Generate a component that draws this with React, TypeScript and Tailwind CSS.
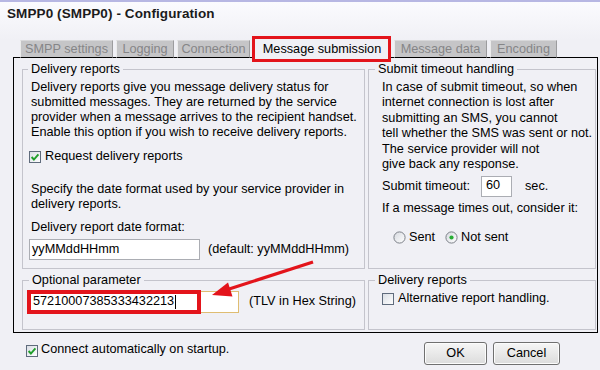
import type { ReactNode } from "react";

const CheckBox = ({ checked }: { checked: boolean }) => (
  <svg width="12" height="12" viewBox="0 0 12 12" className="shrink-0">
    <defs>
      <linearGradient id="cbfill" x1="0" y1="0" x2="1" y2="1">
        <stop offset="0" stopColor="#d9dde4" />
        <stop offset="1" stopColor="#ffffff" />
      </linearGradient>
    </defs>
    <rect x="0.5" y="0.5" width="11" height="11" fill="url(#cbfill)" stroke="#5f6b7c" />
    {checked && (
      <path d="M2.6 6 L4.9 8.5 L9.4 3.3" stroke="#1f9e2a" strokeWidth="1.9" fill="none" />
    )}
  </svg>
);

const Radio = ({ on }: { on: boolean }) => (
  <svg width="13" height="13" viewBox="0 0 13 13" className="shrink-0">
    <defs>
      <linearGradient id="rdfill" x1="0" y1="0" x2="1" y2="1">
        <stop offset="0" stopColor="#d6d9df" />
        <stop offset="1" stopColor="#ffffff" />
      </linearGradient>
    </defs>
    <circle cx="6.5" cy="6.5" r="5.6" fill="url(#rdfill)" stroke="#7c8088" />
    {on && <circle cx="6.5" cy="6.5" r="2.1" fill="#27ad35" />}
  </svg>
);

const Group = ({
  title,
  className,
  legendClass,
  children,
}: {
  title: string;
  className: string;
  legendClass: string;
  children: ReactNode;
}) => (
  <fieldset className={`border border-[#c4c4cc] ${className}`}>
    <legend className={`px-[3px] leading-[15px] ${legendClass}`}>{title}</legend>
    {children}
  </fieldset>
);

const tabs = [
  { name: "SMPP settings", w: "w-[93px]" },
  { name: "Logging", w: "w-[58px]" },
  { name: "Connection", w: "w-[73px]" },
  { name: "Message submission", w: "w-[138px]", active: true },
  { name: "Message data", w: "w-[93px]" },
  { name: "Encoding", w: "w-[67px]" },
];

export default function App() {
  return (
    <div className="relative w-[600px] h-[370px] overflow-hidden bg-[#f0f0f5] text-black font-['Liberation_Sans',Arial,sans-serif] text-[12.7px]">
      {/* title bar */}
      <div className="h-[40px] border-t-2 border-[#b7b7e3] bg-gradient-to-b from-[#fbfbfe] to-[#f0f0f5] pl-[7px] pt-[2px]">
        <span className="font-bold text-[13.5px] text-[#1b1b1b] tracking-[0.1px]">SMPP0 (SMPP0) - Configuration</span>
      </div>

      {/* tabs */}
      <div className="relative z-10 flex items-end gap-[3px] pl-[20px] h-[18px] -mb-px">
        {tabs.map((t) =>
          t.active ? (
            <div
              key={t.name}
              className={`relative ${t.w} h-[20px] flex items-center justify-center bg-[#f0f0f5] border border-b-0 border-black pt-[3px]`}
            >
              {t.name}
              <div className="absolute -left-[2px] -right-[1px] -top-[3px] -bottom-[4px] border-[3px] border-[#e3141b]" />
            </div>
          ) : (
            <div
              key={t.name}
              className={`${t.w} h-[18px] flex items-center justify-center pt-[2px] bg-[#c5c5c7] text-[#858587] border-l border-l-[#ececec] border-r border-r-[#9c9c9e] border-t border-t-[#d8d8da] border-b border-b-black`}
            >
              {t.name}
            </div>
          )
        )}
      </div>

      {/* tab panel */}
      <div className="ml-[13px] w-[585px] h-[276px] border border-black pl-[8px] pr-[1px] pt-[4px]">
        <div className="flex gap-[3px]">
          <Group title="Delivery reports" className="w-[343px] h-[207px] pl-[8px]" legendClass="-ml-[3px]">
            <p className="mt-[3px] leading-[15px] whitespace-nowrap">
              Delivery reports give you message delivery status for
              <br />
              submitted messages. They are returned by the service
              <br />
              provider when a message arrives to the recipient handset.
              <br />
              Enable this option if you wish to receive delivery reports.
            </p>
            <div className="mt-[9px] flex items-center gap-[2px] -ml-[2px] leading-[15px]">
              <CheckBox checked />
              <span className="ml-[2px]">Request delivery reports</span>
            </div>
            <p className="mt-[18px] leading-[15px] whitespace-nowrap">
              Specify the date format used by your service provider in
              <br />
              delivery reports.
            </p>
            <p className="mt-[8px] leading-[15px]">Delivery report date format:</p>
            <div className="mt-[4px] flex items-center -ml-[2px]">
              <div className="w-[171px] h-[21px] border border-[#abadb3] bg-white pl-[2px] leading-[19px]">yyMMddHHmm</div>
              <span className="ml-[8px] pt-[1px]">(default: yyMMddHHmm)</span>
            </div>
          </Group>

          <Group title="Submit timeout handling" className="flex-1 h-[207px] pl-[13px]" legendClass="-ml-[7px]">
            <p className="mt-[3px] leading-[15.4px] whitespace-nowrap">
              In case of submit timeout, so when
              <br />
              internet connection is lost after
              <br />
              submitting an SMS, you cannot
              <br />
              tell whether the SMS was sent or not.
              <br />
              The service provider will not
              <br />
              give back any response.
            </p>
            <div className="mt-[4px] flex items-center">
              <span className="w-[99px]">Submit timeout:</span>
              <div className="w-[31px] h-[21px] border border-[#abadb3] bg-white pl-[4px] leading-[16px]">60</div>
              <span className="ml-[13px]">sec.</span>
            </div>
            <p className="mt-[4px] leading-[15px]">If a message times out, consider it:</p>
            <div className="mt-[14px] flex items-center pl-[11px] leading-[15px]">
              <Radio on={false} />
              <span className="ml-[3px]">Sent</span>
              <span className="ml-[10px]">
                <Radio on />
              </span>
              <span className="ml-[3px]">Not sent</span>
            </div>
          </Group>
        </div>

        <div className="mt-[4px] flex gap-[3px]">
          <Group title="Optional parameter" className="w-[343px] h-[57px] pl-[8px]" legendClass="-ml-[2px]">
            <div className="mt-[3px] flex items-center -ml-[2px]">
              <div className="relative w-[210px] h-[22px] border border-[#dfbd72] bg-white pl-[3px] flex items-center">
                <span>57210007385333432213</span>
                <span className="ml-[1px] w-px h-[14px] bg-black" />
                <div className="absolute -left-[3px] -top-[2px] -bottom-[2px] w-[174px] border-[4px] border-[#e3141b]" />
              </div>
              <span className="ml-[10px]">(TLV in Hex String)</span>
            </div>
          </Group>

          <Group title="Delivery reports" className="flex-1 h-[57px] pl-[13px]" legendClass="-ml-[7px]">
            <div className="mt-[3px] flex items-center leading-[15px]">
              <CheckBox checked={false} />
              <span className="ml-[4px]">Alternative report handling.</span>
            </div>
          </Group>
        </div>
      </div>

      {/* bottom row */}
      <div className="mt-[9px] flex items-start">
        <div className="ml-[26px] flex items-center leading-[15px]">
          <span className="mt-[3px]">
            <CheckBox checked />
          </span>
          <span className="ml-[3px]">Connect automatically on startup.</span>
        </div>
        <div className="ml-auto mr-[40px] flex gap-[6px]">
          <button className="w-[63px] h-[23px] rounded-[3px] border border-[#707070] bg-gradient-to-b from-[#f6f6f6] to-[#dcdcdc] shadow-[inset_0_0_0_1px_#fcfcfc]">
            OK
          </button>
          <button className="w-[67px] h-[23px] rounded-[3px] border border-[#707070] bg-gradient-to-b from-[#f6f6f6] to-[#dcdcdc] shadow-[inset_0_0_0_1px_#fcfcfc]">
            Cancel
          </button>
        </div>
      </div>

      {/* red annotation arrow */}
      <svg className="absolute left-0 top-0 pointer-events-none" width="600" height="370" viewBox="0 0 600 370">
        <line x1="313" y1="262" x2="226" y2="290" stroke="#e3141b" strokeWidth="3.2" />
        <polygon points="212,295 232.5,296.5 228,282.5" fill="#e3141b" />
      </svg>
    </div>
  );
}
